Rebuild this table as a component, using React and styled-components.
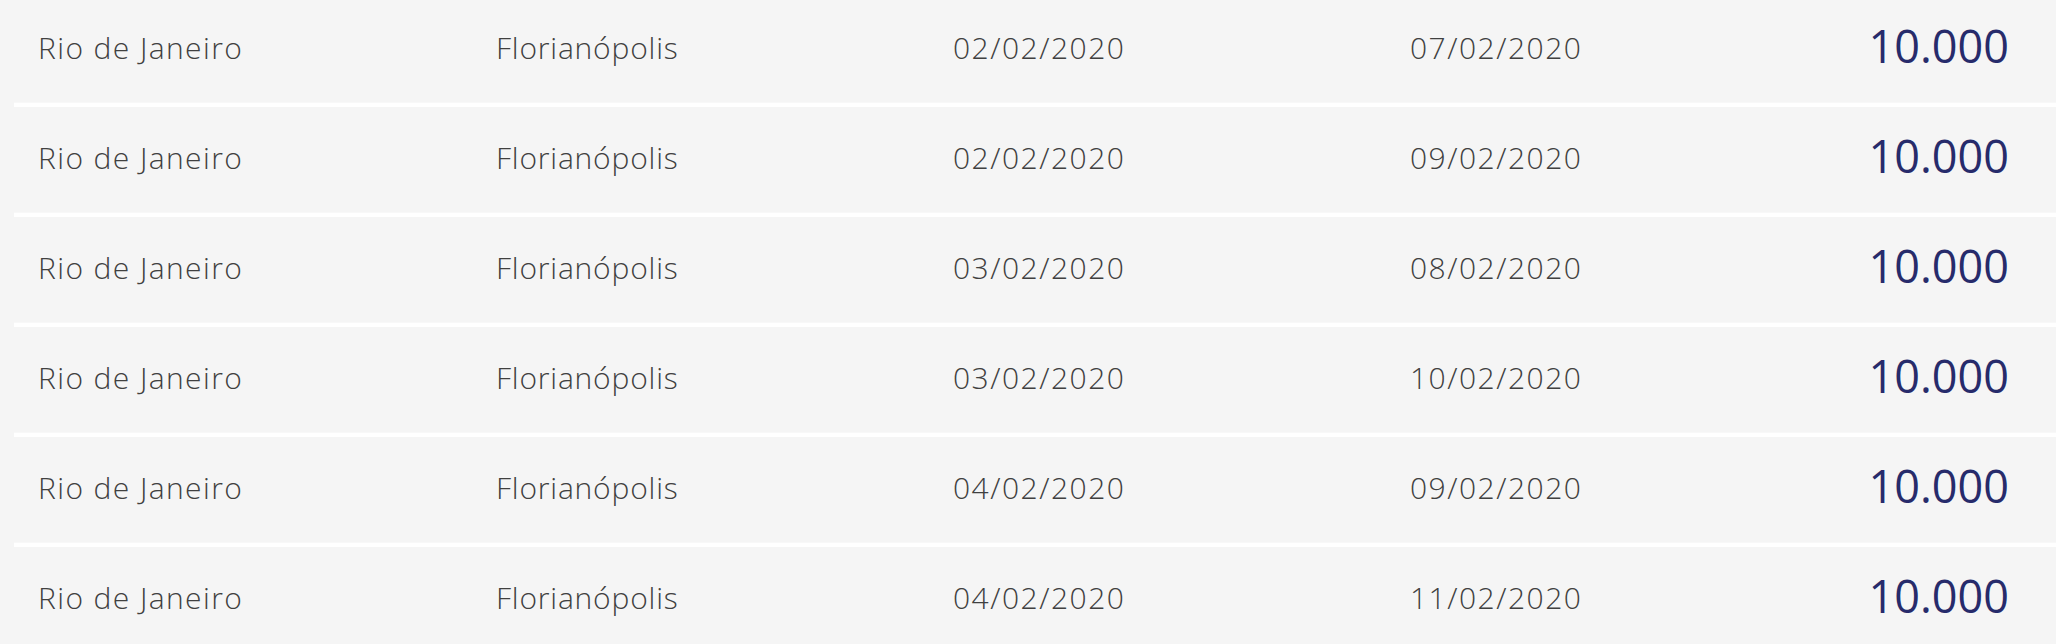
import styled, { createGlobalStyle } from 'styled-components';

const trips = [
    { from: 'Rio de Janeiro', to: 'Florianópolis', out: '02/02/2020', back: '07/02/2020', miles: '10.000' },
    { from: 'Rio de Janeiro', to: 'Florianópolis', out: '02/02/2020', back: '09/02/2020', miles: '10.000' },
    { from: 'Rio de Janeiro', to: 'Florianópolis', out: '03/02/2020', back: '08/02/2020', miles: '10.000' },
    { from: 'Rio de Janeiro', to: 'Florianópolis', out: '03/02/2020', back: '10/02/2020', miles: '10.000' },
    { from: 'Rio de Janeiro', to: 'Florianópolis', out: '04/02/2020', back: '09/02/2020', miles: '10.000' },
    { from: 'Rio de Janeiro', to: 'Florianópolis', out: '04/02/2020', back: '11/02/2020', miles: '10.000' },
];

function App() {
    return (
        <>
            <GlobalStyle />
            <List>
                {trips.map((t, i) => (
                    <Row key={i}>
                        <Cell $wide>{t.from}</Cell>
                        <Cell>{t.to}</Cell>
                        <Cell $date>{t.out}</Cell>
                        <Cell $date>{t.back}</Cell>
                        <Miles>{t.miles}</Miles>
                    </Row>
                ))}
            </List>
        </>
    );
}

const GlobalStyle = createGlobalStyle`
    body {
        margin: 0;
        background: #f5f5f5;
        font-family: "Open Sans", Lato, sans-serif;
        overflow: hidden;
    }
`;

const List = styled.div`
    margin: -3px 0 0 14px;
    background: #ffffff;
    display: flex;
    flex-direction: column;
    gap: 4px;
`;

const Row = styled.div`
    display: grid;
    grid-template-columns: 458px 457px 457px 1fr auto;
    align-items: center;
    height: 105px;
    padding: 0 47px 0 24px;
    background: #f5f5f5;
    border-bottom: 1px solid #f8f8f8;
`;

const Cell = styled.span`
    font-size: 30px;
    font-weight: 350;
    letter-spacing: ${p => (p.$date ? '1.5px' : p.$wide ? '1.4px' : '0.8px')};
    color: #404040;
    margin-top: -4px;
`;

const Miles = styled.span`
    font-size: 45px;
    color: #272b6b;
    text-align: right;
    margin-top: -8px;
`;

export default App;
